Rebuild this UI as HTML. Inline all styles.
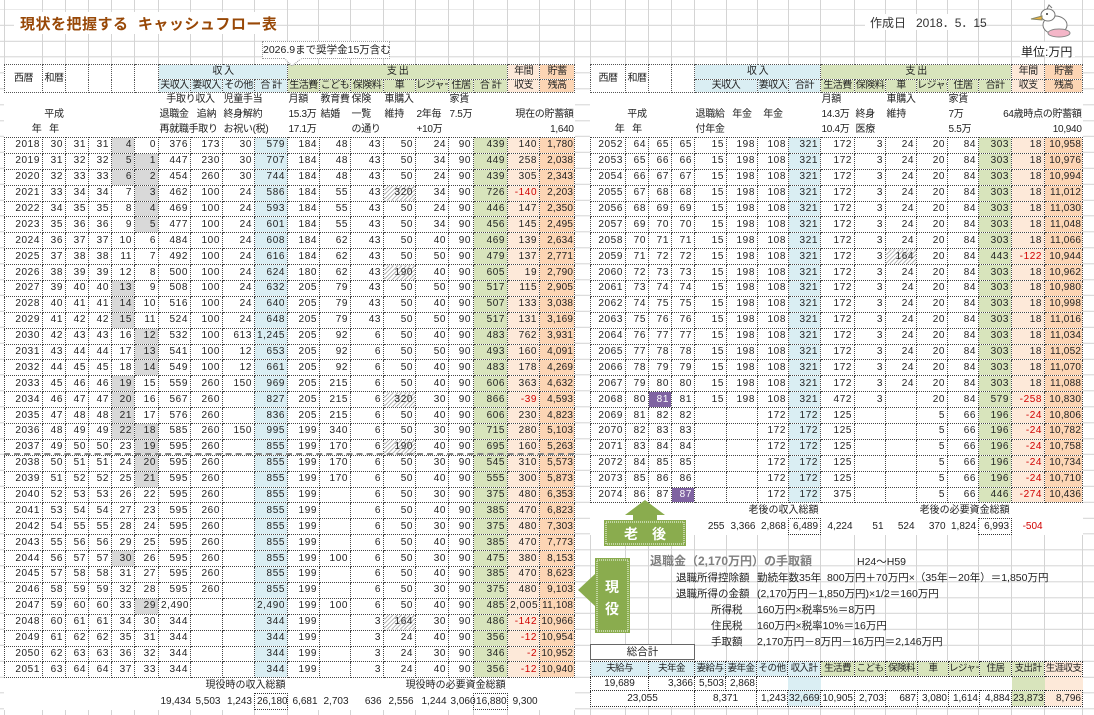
<!DOCTYPE html>
<html><head><meta charset="utf-8"><style>
*{margin:0;padding:0;box-sizing:border-box}
body{width:1094px;height:715px;overflow:hidden;position:relative;background:#fff;font-family:"Liberation Sans","Noto Sans CJK JP",sans-serif;font-size:11px;color:#222;
background-image:repeating-linear-gradient(to bottom,transparent 0 14.9px,#d4d4d4 14.9px 15.9px);background-position:0 9.8px}
.vl{position:absolute;top:0;width:1px;height:715px;background:#d4d4d4}
.a{position:absolute;white-space:nowrap}
table{position:absolute;top:64px;border-collapse:collapse;table-layout:fixed;background:#fff;font-size:10px;letter-spacing:.6px}
td{padding:0 2px;white-space:nowrap;overflow:hidden;text-align:right;line-height:12px}
tr.h1{height:15px}tr.h2{height:13px}
tr.h1 td,tr.h2 td{text-align:center;border:1px dotted #555;letter-spacing:-.5px;font-size:10px;padding:0}
tr.n{height:15px}tr.n td{border:none;text-align:left;letter-spacing:-.3px;padding:0 1px;font-size:10px;overflow:visible}
tr.d{height:15.9px}tr.d td{border:1px dotted #444}
tr.t{height:15.9px;background:transparent}tr.t td{border:none;background:transparent;letter-spacing:0;overflow:visible}
.L tr.d td:nth-child(10),.R tr.d td:nth-child(8){background:#daeef3}
.L tr.d td:nth-child(17),.R tr.d td:nth-child(14){background:#d8e4bc}
.L tr.d td:nth-child(18),.R tr.d td:nth-child(15){background:#fde9d9}
.L tr.d td:nth-child(19),.R tr.d td:nth-child(16){background:#fcd5b4;letter-spacing:.2px;padding:0 1px}
tr.d td.g{background:#d9d9d9}
tr.d td.p{background:#8064a2;color:#fff}
tr.d td.hh{background:repeating-linear-gradient(135deg,#bbb 0 1px,#fff 1px 3px)}
.r{color:#d00000}
.bl{background:#daeef3}.gr{background:#d8e4bc}.o1{background:#fde9d9}.o2{background:#fcd5b4}
.c{text-align:center!important}.l{text-align:left!important}
.bx{border:1px dotted #333!important}
.nt{font-size:10.5px}
.bt td{padding:0 1px;letter-spacing:0}
.bt tr:first-child td{font-size:9.5px;letter-spacing:-.6px;padding:0}
</style></head><body>
<div class="vl" style="left:4px"></div><div class="vl" style="left:42px"></div><div class="vl" style="left:65px"></div><div class="vl" style="left:88px"></div><div class="vl" style="left:111px"></div><div class="vl" style="left:134px"></div><div class="vl" style="left:158px"></div><div class="vl" style="left:190px"></div><div class="vl" style="left:222px"></div><div class="vl" style="left:254px"></div><div class="vl" style="left:287px"></div><div class="vl" style="left:318px"></div><div class="vl" style="left:350px"></div><div class="vl" style="left:383px"></div><div class="vl" style="left:415px"></div><div class="vl" style="left:448px"></div><div class="vl" style="left:473px"></div><div class="vl" style="left:507px"></div><div class="vl" style="left:539px"></div><div class="vl" style="left:574px"></div>
<div class="vl" style="left:590px"></div><div class="vl" style="left:625px"></div><div class="vl" style="left:648px"></div><div class="vl" style="left:671px"></div><div class="vl" style="left:694px"></div><div class="vl" style="left:726px"></div><div class="vl" style="left:757px"></div><div class="vl" style="left:788px"></div><div class="vl" style="left:820px"></div><div class="vl" style="left:854px"></div><div class="vl" style="left:885px"></div><div class="vl" style="left:916px"></div><div class="vl" style="left:947px"></div><div class="vl" style="left:978px"></div><div class="vl" style="left:1011px"></div><div class="vl" style="left:1044px"></div><div class="vl" style="left:1082px"></div>

<div class="a" style="left:14px;top:12px;width:260px;height:22px;background:#fff"></div>
<div class="a" style="left:20px;top:13px;font-size:15px;font-weight:bold;color:#984807;letter-spacing:.5px">現状を把握する&nbsp; キャッシュフロー表</div>
<div class="a" style="left:865px;top:14px;width:110px;height:16px;background:#fff"></div>
<div class="a" style="left:870px;top:14px;font-size:12px;color:#333">作成日&nbsp;&nbsp; 2018．5．15</div>
<svg class="a" style="left:1025px;top:3px" width="50" height="36" viewBox="0 0 50 36"><ellipse cx="30" cy="22" rx="12" ry="9" fill="#fff" stroke="#777"/><ellipse cx="34" cy="30" rx="11" ry="4" fill="#f4b6c8" stroke="#888"/><ellipse cx="23" cy="12" rx="7" ry="6" fill="#fff" stroke="#777"/><path d="M17 13 L6 16 L17 17 Z" fill="#e8b040" stroke="#886"/><path d="M22 6 L24 2 L27 5" fill="none" stroke="#777"/><circle cx="22" cy="11" r="1" fill="#333"/></svg>
<div class="a" style="left:1020px;top:42px;width:55px;height:15px;background:#fff"></div>
<div class="a" style="left:1021px;top:43px;font-size:12px">単位:万円</div>

<div class="a" style="left:262px;top:41px;width:128px;height:18px;background:#fff;border:1px dotted #999;font-size:10.5px;text-align:center;line-height:16px;z-index:3">2026.9まで奨学金15万含む</div>
<svg class="a" style="left:280px;top:58px;z-index:3" width="30" height="10"><path d="M4 0 L12 8 L22 0" fill="#fff" stroke="#999" stroke-dasharray="1 1"/><rect x="5" y="0" width="16" height="1.5" fill="#fff"/></svg>

<table class="L" style="left:4px;width:570px">
<colgroup><col style="width:38px"><col style="width:23px"><col style="width:23px"><col style="width:23px"><col style="width:23px"><col style="width:24px"><col style="width:32px"><col style="width:32px"><col style="width:32px"><col style="width:33px"><col style="width:32px"><col style="width:31px"><col style="width:33px"><col style="width:32px"><col style="width:33px"><col style="width:25px"><col style="width:34px"><col style="width:32px"><col style="width:35px"></colgroup>
<tr class="h1"><td rowspan="2">西暦</td><td rowspan="2">和暦</td><td rowspan="2"></td><td rowspan="2"></td><td rowspan="2"></td><td rowspan="2"></td><td colspan="4" class="bl">収 入</td><td colspan="7" class="gr">支 出</td><td class="o1">年間</td><td class="o2">貯蓄</td></tr>
<tr class="h2"><td class="bl">夫収入</td><td class="bl">妻収入</td><td class="bl">その他</td><td class="bl">合 計</td><td class="gr">生活費</td><td class="gr">こども</td><td class="gr">保険料</td><td class="gr">車</td><td class="gr">レジャー</td><td class="gr">住居</td><td class="gr">合 計</td><td class="o1">収支</td><td class="o2">残高</td></tr>
<tr class="n"><td></td><td></td><td></td><td></td><td></td><td></td><td colspan="2" class="c">手取り収入</td><td colspan="2">児童手当</td><td>月額</td><td>教育費</td><td>保険</td><td>車購入</td><td></td><td>家賃</td><td></td><td></td><td></td></tr>
<tr class="n"><td></td><td class="c">平成</td><td></td><td></td><td></td><td></td><td>退職金</td><td class="c">追納</td><td colspan="2">終身解約</td><td>15.3万</td><td>結婚</td><td>一覧</td><td>維持</td><td>2年毎</td><td>7.5万</td><td></td><td colspan="2" style="text-align:right">現在の貯蓄額</td></tr>
<tr class="n"><td style="text-align:right">年</td><td class="c">年</td><td></td><td></td><td></td><td></td><td colspan="2">再就職手取り</td><td colspan="2">お祝い(税)</td><td>17.1万</td><td></td><td>の通り</td><td></td><td>+10万</td><td></td><td></td><td></td><td style="text-align:right">1,640</td></tr>
<tr class="d"><td>2018</td><td>30</td><td>31</td><td>31</td><td class="g">4</td><td>0</td><td>376</td><td>173</td><td>30</td><td>579</td><td>184</td><td>48</td><td>43</td><td>50</td><td>24</td><td>90</td><td>439</td><td>140</td><td>1,780</td></tr>
<tr class="d"><td>2019</td><td>31</td><td>32</td><td>32</td><td class="g">5</td><td class="g">1</td><td>447</td><td>230</td><td>30</td><td>707</td><td>184</td><td>48</td><td>43</td><td>50</td><td>34</td><td>90</td><td>449</td><td>258</td><td>2,038</td></tr>
<tr class="d"><td>2020</td><td>32</td><td>33</td><td>33</td><td class="g">6</td><td class="g">2</td><td>454</td><td>260</td><td>30</td><td>744</td><td>184</td><td>48</td><td>43</td><td>50</td><td>24</td><td>90</td><td>439</td><td>305</td><td>2,343</td></tr>
<tr class="d"><td>2021</td><td>33</td><td>34</td><td>34</td><td>7</td><td class="g">3</td><td>462</td><td>100</td><td>24</td><td>586</td><td>184</td><td>55</td><td>43</td><td class="hh">320</td><td>34</td><td>90</td><td>726</td><td class="r">-140</td><td>2,203</td></tr>
<tr class="d"><td>2022</td><td>34</td><td>35</td><td>35</td><td>8</td><td class="g">4</td><td>469</td><td>100</td><td>24</td><td>593</td><td>184</td><td>55</td><td>43</td><td>50</td><td>24</td><td>90</td><td>446</td><td>147</td><td>2,350</td></tr>
<tr class="d"><td>2023</td><td>35</td><td>36</td><td>36</td><td>9</td><td class="g">5</td><td>477</td><td>100</td><td>24</td><td>601</td><td>184</td><td>55</td><td>43</td><td>50</td><td>34</td><td>90</td><td>456</td><td>145</td><td>2,495</td></tr>
<tr class="d"><td>2024</td><td>36</td><td>37</td><td>37</td><td>10</td><td>6</td><td>484</td><td>100</td><td>24</td><td>608</td><td>184</td><td>62</td><td>43</td><td>50</td><td>40</td><td>90</td><td>469</td><td>139</td><td>2,634</td></tr>
<tr class="d"><td>2025</td><td>37</td><td>38</td><td>38</td><td>11</td><td>7</td><td>492</td><td>100</td><td>24</td><td>616</td><td>184</td><td>62</td><td>43</td><td>50</td><td>50</td><td>90</td><td>479</td><td>137</td><td>2,771</td></tr>
<tr class="d"><td>2026</td><td>38</td><td>39</td><td>39</td><td>12</td><td>8</td><td>500</td><td>100</td><td>24</td><td>624</td><td>180</td><td>62</td><td>43</td><td class="hh">190</td><td>40</td><td>90</td><td>605</td><td>19</td><td>2,790</td></tr>
<tr class="d"><td>2027</td><td>39</td><td>40</td><td>40</td><td class="g">13</td><td>9</td><td>508</td><td>100</td><td>24</td><td>632</td><td>205</td><td>79</td><td>43</td><td>50</td><td>50</td><td>90</td><td>517</td><td>115</td><td>2,905</td></tr>
<tr class="d"><td>2028</td><td>40</td><td>41</td><td>41</td><td class="g">14</td><td>10</td><td>516</td><td>100</td><td>24</td><td>640</td><td>205</td><td>79</td><td>43</td><td>50</td><td>40</td><td>90</td><td>507</td><td>133</td><td>3,038</td></tr>
<tr class="d"><td>2029</td><td>41</td><td>42</td><td>42</td><td class="g">15</td><td>11</td><td>524</td><td>100</td><td>24</td><td>648</td><td>205</td><td>79</td><td>43</td><td>50</td><td>50</td><td>90</td><td>517</td><td>131</td><td>3,169</td></tr>
<tr class="d"><td>2030</td><td>42</td><td>43</td><td>43</td><td>16</td><td class="g">12</td><td>532</td><td>100</td><td>613</td><td>1,245</td><td>205</td><td>92</td><td>6</td><td>50</td><td>40</td><td>90</td><td>483</td><td>762</td><td>3,931</td></tr>
<tr class="d"><td>2031</td><td>43</td><td>44</td><td>44</td><td>17</td><td class="g">13</td><td>541</td><td>100</td><td>12</td><td>653</td><td>205</td><td>92</td><td>6</td><td>50</td><td>50</td><td>90</td><td>493</td><td>160</td><td>4,091</td></tr>
<tr class="d"><td>2032</td><td>44</td><td>45</td><td>45</td><td>18</td><td class="g">14</td><td>549</td><td>100</td><td>12</td><td>661</td><td>205</td><td>92</td><td>6</td><td>50</td><td>40</td><td>90</td><td>483</td><td>178</td><td>4,269</td></tr>
<tr class="d"><td>2033</td><td>45</td><td>46</td><td>46</td><td class="g">19</td><td>15</td><td>559</td><td>260</td><td>150</td><td>969</td><td>205</td><td>215</td><td>6</td><td>50</td><td>40</td><td>90</td><td>606</td><td>363</td><td>4,632</td></tr>
<tr class="d"><td>2034</td><td>46</td><td>47</td><td>47</td><td class="g">20</td><td>16</td><td>567</td><td>260</td><td></td><td>827</td><td>205</td><td>215</td><td>6</td><td class="hh">320</td><td>30</td><td>90</td><td>866</td><td class="r">-39</td><td>4,593</td></tr>
<tr class="d"><td>2035</td><td>47</td><td>48</td><td>48</td><td class="g">21</td><td>17</td><td>576</td><td>260</td><td></td><td>836</td><td>205</td><td>215</td><td>6</td><td>50</td><td>40</td><td>90</td><td>606</td><td>230</td><td>4,823</td></tr>
<tr class="d"><td>2036</td><td>48</td><td>49</td><td>49</td><td class="g">22</td><td class="g">18</td><td>585</td><td>260</td><td>150</td><td>995</td><td>199</td><td>340</td><td>6</td><td>50</td><td>30</td><td>90</td><td>715</td><td>280</td><td>5,103</td></tr>
<tr class="d"><td>2037</td><td>49</td><td>50</td><td>50</td><td>23</td><td class="g">19</td><td>595</td><td>260</td><td></td><td>855</td><td>199</td><td>170</td><td>6</td><td class="hh">190</td><td>40</td><td>90</td><td>695</td><td>160</td><td>5,263</td></tr>
<tr class="d"><td>2038</td><td>50</td><td>51</td><td>51</td><td>24</td><td class="g">20</td><td>595</td><td>260</td><td></td><td>855</td><td>199</td><td>170</td><td>6</td><td>50</td><td>30</td><td>90</td><td>545</td><td>310</td><td>5,573</td></tr>
<tr class="d"><td>2039</td><td>51</td><td>52</td><td>52</td><td>25</td><td class="g">21</td><td>595</td><td>260</td><td></td><td>855</td><td>199</td><td>170</td><td>6</td><td>50</td><td>40</td><td>90</td><td>555</td><td>300</td><td>5,873</td></tr>
<tr class="d"><td>2040</td><td>52</td><td>53</td><td>53</td><td>26</td><td>22</td><td>595</td><td>260</td><td></td><td>855</td><td>199</td><td></td><td>6</td><td>50</td><td>30</td><td>90</td><td>375</td><td>480</td><td>6,353</td></tr>
<tr class="d"><td>2041</td><td>53</td><td>54</td><td>54</td><td>27</td><td>23</td><td>595</td><td>260</td><td></td><td>855</td><td>199</td><td></td><td>6</td><td>50</td><td>40</td><td>90</td><td>385</td><td>470</td><td>6,823</td></tr>
<tr class="d"><td>2042</td><td>54</td><td>55</td><td>55</td><td>28</td><td>24</td><td>595</td><td>260</td><td></td><td>855</td><td>199</td><td></td><td>6</td><td>50</td><td>30</td><td>90</td><td>375</td><td>480</td><td>7,303</td></tr>
<tr class="d"><td>2043</td><td>55</td><td>56</td><td>56</td><td>29</td><td>25</td><td>595</td><td>260</td><td></td><td>855</td><td>199</td><td></td><td>6</td><td>50</td><td>40</td><td>90</td><td>385</td><td>470</td><td>7,773</td></tr>
<tr class="d"><td>2044</td><td>56</td><td>57</td><td>57</td><td class="g">30</td><td>26</td><td>595</td><td>260</td><td></td><td>855</td><td>199</td><td>100</td><td>6</td><td>50</td><td>30</td><td>90</td><td>475</td><td>380</td><td>8,153</td></tr>
<tr class="d"><td>2045</td><td>57</td><td>58</td><td>58</td><td>31</td><td>27</td><td>595</td><td>260</td><td></td><td>855</td><td>199</td><td></td><td>6</td><td>50</td><td>40</td><td>90</td><td>385</td><td>470</td><td>8,623</td></tr>
<tr class="d"><td>2046</td><td>58</td><td>59</td><td>59</td><td>32</td><td>28</td><td>595</td><td>260</td><td></td><td>855</td><td>199</td><td></td><td>6</td><td>50</td><td>30</td><td>90</td><td>375</td><td>480</td><td>9,103</td></tr>
<tr class="d"><td>2047</td><td>59</td><td>60</td><td>60</td><td>33</td><td class="g">29</td><td>2,490</td><td></td><td></td><td>2,490</td><td>199</td><td>100</td><td>6</td><td>50</td><td>40</td><td>90</td><td>485</td><td>2,005</td><td>11,108</td></tr>
<tr class="d"><td>2048</td><td>60</td><td>61</td><td>61</td><td>34</td><td>30</td><td>344</td><td></td><td></td><td>344</td><td>199</td><td></td><td>3</td><td class="hh">164</td><td>30</td><td>90</td><td>486</td><td class="r">-142</td><td>10,966</td></tr>
<tr class="d"><td>2049</td><td>61</td><td>62</td><td>62</td><td>35</td><td>31</td><td>344</td><td></td><td></td><td>344</td><td>199</td><td></td><td>3</td><td>24</td><td>40</td><td>90</td><td>356</td><td class="r">-12</td><td>10,954</td></tr>
<tr class="d"><td>2050</td><td>62</td><td>63</td><td>63</td><td>36</td><td>32</td><td>344</td><td></td><td></td><td>344</td><td>199</td><td></td><td>3</td><td>24</td><td>30</td><td>90</td><td>346</td><td class="r">-2</td><td>10,952</td></tr>
<tr class="d"><td>2051</td><td>63</td><td>64</td><td>64</td><td>37</td><td>33</td><td>344</td><td></td><td></td><td>344</td><td>199</td><td></td><td>3</td><td>24</td><td>40</td><td>90</td><td>356</td><td class="r">-12</td><td>10,940</td></tr>
<tr class="t"><td colspan="6"></td><td colspan="4">現役時の収入総額</td><td colspan="7">現役時の必要資金総額</td><td></td><td></td></tr>
<tr class="t"><td colspan="6"></td><td>19,434</td><td>5,503</td><td>1,243</td><td class="bx">26,180</td><td>6,681</td><td>2,703</td><td>636</td><td>2,556</td><td>1,244</td><td>3,060</td><td class="bx">16,880</td><td>9,300</td><td></td></tr>
</table>
<div class="a" style="left:4px;top:453px;width:570px;border-top:2px dashed #888"></div>

<table class="R" style="left:590px;width:492px">
<colgroup><col style="width:35px"><col style="width:23px"><col style="width:23px"><col style="width:23px"><col style="width:32px"><col style="width:31px"><col style="width:31px"><col style="width:32px"><col style="width:34px"><col style="width:31px"><col style="width:31px"><col style="width:31px"><col style="width:31px"><col style="width:33px"><col style="width:33px"><col style="width:38px"></colgroup>
<tr class="h1"><td rowspan="2">西暦</td><td rowspan="2">和暦</td><td rowspan="2"></td><td rowspan="2"></td><td colspan="4" class="bl">収 入</td><td colspan="6" class="gr">支 出</td><td class="o1">年間</td><td class="o2">貯蓄</td></tr>
<tr class="h2"><td colspan="2" class="bl">夫収入</td><td class="bl">妻収入</td><td class="bl">合計</td><td class="gr">生活費</td><td class="gr">保険料</td><td class="gr">車</td><td class="gr">レジャー</td><td class="gr">住居</td><td class="gr">合計</td><td class="o1">収支</td><td class="o2">残高</td></tr>
<tr class="n"><td></td><td></td><td></td><td></td><td></td><td></td><td></td><td></td><td>月額</td><td></td><td>車購入</td><td></td><td>家賃</td><td></td><td></td><td></td></tr>
<tr class="n"><td></td><td class="c">平成</td><td></td><td></td><td>退職給</td><td class="c">年金</td><td class="c">年金</td><td></td><td>14.3万</td><td>終身</td><td>維持</td><td></td><td>7万</td><td colspan="3" style="text-align:right">64歳時点の貯蓄額</td></tr>
<tr class="n"><td style="text-align:right">年</td><td class="c">年</td><td></td><td></td><td>付年金</td><td></td><td></td><td></td><td>10.4万</td><td>医療</td><td></td><td></td><td>5.5万</td><td></td><td></td><td style="text-align:right">10,940</td></tr>
<tr class="d"><td>2052</td><td>64</td><td>65</td><td>65</td><td>15</td><td>198</td><td>108</td><td>321</td><td>172</td><td>3</td><td>24</td><td>20</td><td>84</td><td>303</td><td>18</td><td>10,958</td></tr>
<tr class="d"><td>2053</td><td>65</td><td>66</td><td>66</td><td>15</td><td>198</td><td>108</td><td>321</td><td>172</td><td>3</td><td>24</td><td>20</td><td>84</td><td>303</td><td>18</td><td>10,976</td></tr>
<tr class="d"><td>2054</td><td>66</td><td>67</td><td>67</td><td>15</td><td>198</td><td>108</td><td>321</td><td>172</td><td>3</td><td>24</td><td>20</td><td>84</td><td>303</td><td>18</td><td>10,994</td></tr>
<tr class="d"><td>2055</td><td>67</td><td>68</td><td>68</td><td>15</td><td>198</td><td>108</td><td>321</td><td>172</td><td>3</td><td>24</td><td>20</td><td>84</td><td>303</td><td>18</td><td>11,012</td></tr>
<tr class="d"><td>2056</td><td>68</td><td>69</td><td>69</td><td>15</td><td>198</td><td>108</td><td>321</td><td>172</td><td>3</td><td>24</td><td>20</td><td>84</td><td>303</td><td>18</td><td>11,030</td></tr>
<tr class="d"><td>2057</td><td>69</td><td>70</td><td>70</td><td>15</td><td>198</td><td>108</td><td>321</td><td>172</td><td>3</td><td>24</td><td>20</td><td>84</td><td>303</td><td>18</td><td>11,048</td></tr>
<tr class="d"><td>2058</td><td>70</td><td>71</td><td>71</td><td>15</td><td>198</td><td>108</td><td>321</td><td>172</td><td>3</td><td>24</td><td>20</td><td>84</td><td>303</td><td>18</td><td>11,066</td></tr>
<tr class="d"><td>2059</td><td>71</td><td>72</td><td>72</td><td>15</td><td>198</td><td>108</td><td>321</td><td>172</td><td>3</td><td class="hh">164</td><td>20</td><td>84</td><td>443</td><td class="r">-122</td><td>10,944</td></tr>
<tr class="d"><td>2060</td><td>72</td><td>73</td><td>73</td><td>15</td><td>198</td><td>108</td><td>321</td><td>172</td><td>3</td><td>24</td><td>20</td><td>84</td><td>303</td><td>18</td><td>10,962</td></tr>
<tr class="d"><td>2061</td><td>73</td><td>74</td><td>74</td><td>15</td><td>198</td><td>108</td><td>321</td><td>172</td><td>3</td><td>24</td><td>20</td><td>84</td><td>303</td><td>18</td><td>10,980</td></tr>
<tr class="d"><td>2062</td><td>74</td><td>75</td><td>75</td><td>15</td><td>198</td><td>108</td><td>321</td><td>172</td><td>3</td><td>24</td><td>20</td><td>84</td><td>303</td><td>18</td><td>10,998</td></tr>
<tr class="d"><td>2063</td><td>75</td><td>76</td><td>76</td><td>15</td><td>198</td><td>108</td><td>321</td><td>172</td><td>3</td><td>24</td><td>20</td><td>84</td><td>303</td><td>18</td><td>11,016</td></tr>
<tr class="d"><td>2064</td><td>76</td><td>77</td><td>77</td><td>15</td><td>198</td><td>108</td><td>321</td><td>172</td><td>3</td><td>24</td><td>20</td><td>84</td><td>303</td><td>18</td><td>11,034</td></tr>
<tr class="d"><td>2065</td><td>77</td><td>78</td><td>78</td><td>15</td><td>198</td><td>108</td><td>321</td><td>172</td><td>3</td><td>24</td><td>20</td><td>84</td><td>303</td><td>18</td><td>11,052</td></tr>
<tr class="d"><td>2066</td><td>78</td><td>79</td><td>79</td><td>15</td><td>198</td><td>108</td><td>321</td><td>172</td><td>3</td><td>24</td><td>20</td><td>84</td><td>303</td><td>18</td><td>11,070</td></tr>
<tr class="d"><td>2067</td><td>79</td><td>80</td><td>80</td><td>15</td><td>198</td><td>108</td><td>321</td><td>172</td><td>3</td><td>24</td><td>20</td><td>84</td><td>303</td><td>18</td><td>11,088</td></tr>
<tr class="d"><td>2068</td><td>80</td><td class="p">81</td><td>81</td><td>15</td><td>198</td><td>108</td><td>321</td><td>472</td><td>3</td><td></td><td>20</td><td>84</td><td>579</td><td class="r">-258</td><td>10,830</td></tr>
<tr class="d"><td>2069</td><td>81</td><td>82</td><td>82</td><td></td><td></td><td>172</td><td>172</td><td>125</td><td></td><td></td><td>5</td><td>66</td><td>196</td><td class="r">-24</td><td>10,806</td></tr>
<tr class="d"><td>2070</td><td>82</td><td>83</td><td>83</td><td></td><td></td><td>172</td><td>172</td><td>125</td><td></td><td></td><td>5</td><td>66</td><td>196</td><td class="r">-24</td><td>10,782</td></tr>
<tr class="d"><td>2071</td><td>83</td><td>84</td><td>84</td><td></td><td></td><td>172</td><td>172</td><td>125</td><td></td><td></td><td>5</td><td>66</td><td>196</td><td class="r">-24</td><td>10,758</td></tr>
<tr class="d"><td>2072</td><td>84</td><td>85</td><td>85</td><td></td><td></td><td>172</td><td>172</td><td>125</td><td></td><td></td><td>5</td><td>66</td><td>196</td><td class="r">-24</td><td>10,734</td></tr>
<tr class="d"><td>2073</td><td>85</td><td>86</td><td>86</td><td></td><td></td><td>172</td><td>172</td><td>125</td><td></td><td></td><td>5</td><td>66</td><td>196</td><td class="r">-24</td><td>10,710</td></tr>
<tr class="d"><td>2074</td><td>86</td><td>87</td><td class="p">87</td><td></td><td></td><td>172</td><td>172</td><td>375</td><td></td><td></td><td>5</td><td>66</td><td>446</td><td class="r">-274</td><td>10,436</td></tr>
<tr class="t"><td colspan="4"></td><td colspan="4">老後の収入総額</td><td colspan="6">老後の必要資金総額</td><td></td><td></td></tr>
<tr class="t"><td colspan="4"></td><td>255</td><td>3,366</td><td>2,868</td><td class="bx">6,489</td><td>4,224</td><td>51</td><td>524</td><td>370</td><td>1,824</td><td class="bx">6,993</td><td class="r">-504</td><td></td></tr>
</table>

<svg class="a" style="left:603px;top:498px" width="84" height="49"><path d="M42 2 L62 17 L54 17 L54 22 L83 22 L83 48 L1 48 L1 22 L30 22 L30 17 L22 17 Z" fill="#8aac4e"/><rect x="3" y="24" width="78" height="22" fill="none" stroke="#fff" stroke-dasharray="1 1"/><text x="42" y="41" font-size="14" font-weight="bold" fill="#fff" text-anchor="middle" font-family="Liberation Sans,Noto Sans CJK JP,sans-serif">老&#8195;後</text></svg>
<svg class="a" style="left:577px;top:558px" width="54" height="76"><path d="M1 32 L18 16 L18 0 L53 0 L53 75 L18 75 L18 48 Z" fill="#8aac4e"/><rect x="20" y="2" width="31" height="71" fill="none" stroke="#fff" stroke-dasharray="1 1"/><text x="35" y="34" font-size="14" font-weight="bold" fill="#fff" text-anchor="middle" font-family="Liberation Sans,Noto Sans CJK JP,sans-serif">現</text><text x="35" y="56" font-size="14" font-weight="bold" fill="#fff" text-anchor="middle" font-family="Liberation Sans,Noto Sans CJK JP,sans-serif">役</text></svg>

<div class="a" style="left:650px;top:552px;font-size:12px;font-weight:bold;color:#7f7f7f">退職金（2,170万円）の手取額</div>
<div class="a" style="left:857px;top:554px;font-size:10.5px">H24〜H59</div>
<div class="a nt" style="left:676px;top:570px">退職所得控除額</div>
<div class="a nt" style="left:757px;top:570px">勤続年数35年&nbsp; 800万円＋70万円×（35年－20年）＝1,850万円</div>
<div class="a nt" style="left:676px;top:586px">退職所得の金額</div>
<div class="a nt" style="left:757px;top:586px">(2,170万円－1,850万円)×1/2＝160万円</div>
<div class="a nt" style="left:711px;top:602px">所得税</div>
<div class="a nt" style="left:757px;top:602px">160万円×税率5%＝8万円</div>
<div class="a nt" style="left:711px;top:618px">住民税</div>
<div class="a nt" style="left:757px;top:618px">160万円×税率10%＝16万円</div>
<div class="a nt" style="left:711px;top:634px">手取額</div>
<div class="a nt" style="left:757px;top:634px">2,170万円－8万円－16万円＝2,146万円</div>
<div class="a" style="left:590px;top:644px;width:105px;height:16px;border:1px solid #666;background:#fff;text-align:center;line-height:14px;font-size:10.5px">総合計</div>

<table class="bt" style="left:590px;top:661px;width:492px;letter-spacing:0">
<colgroup><col style="width:58px"><col style="width:46px"><col style="width:31px"><col style="width:31px"><col style="width:31px"><col style="width:33px"><col style="width:34px"><col style="width:31px"><col style="width:32px"><col style="width:31px"><col style="width:31px"><col style="width:32px"><col style="width:33px"><col style="width:38px"></colgroup>
<tr style="height:15px"><td class="bl c bx">夫給与</td><td class="bl c bx">夫年金</td><td class="bl c bx">妻給与</td><td class="bl c bx">妻年金</td><td class="bl c bx">その他</td><td class="bl c bx">収入計</td><td class="gr c bx">生活費</td><td class="gr c bx">こども</td><td class="gr c bx">保険料</td><td class="gr c bx">車</td><td class="gr c bx">レジャー</td><td class="gr c bx">住居</td><td class="gr c bx">支出計</td><td class="o1 c bx">生涯収支</td></tr>
<tr style="height:14px"><td class="c bx">19,689</td><td class="bx">3,366</td><td class="bx">5,503</td><td class="bx">2,868</td><td></td><td class="bl"></td><td></td><td></td><td></td><td></td><td></td><td></td><td class="gr"></td><td class="o1"></td></tr>
<tr style="height:16px"><td colspan="2" class="c bx">23,055</td><td colspan="2" class="c bx">8,371</td><td class="bx">1,243</td><td class="bx bl">32,669</td><td class="bx">10,905</td><td class="bx">2,703</td><td class="bx">687</td><td class="bx">3,080</td><td class="bx">1,614</td><td class="bx">4,884</td><td class="bx gr">23,873</td><td class="bx o1">8,796</td></tr>
</table>
</body></html>
